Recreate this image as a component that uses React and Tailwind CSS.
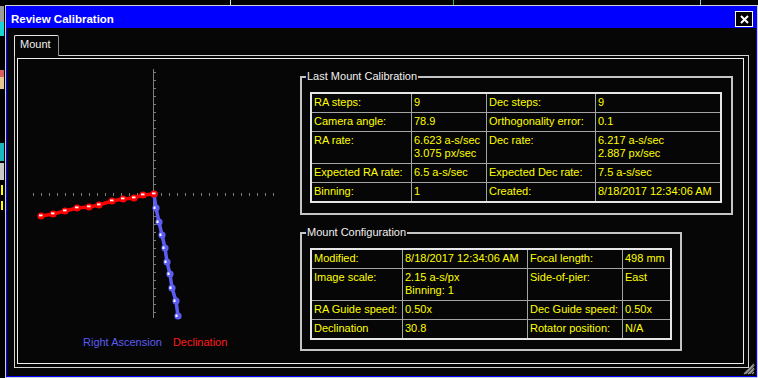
import React from 'react'

const RED = [[41,216],[53,214],[65,211],[77,208],[89,207],[99,205],[112,201],[123,199],[134,198],[143,195],[154,194]]
const BLUE = [[154,194],[156,208],[159,222],[162,235],[165,248],[167,262],[170,274],[172,288],[176,301],[178,316]]

const calibration = [
  ['RA steps:', '9', 'Dec steps:', '9'],
  ['Camera angle:', '78.9', 'Orthogonality error:', '0.1'],
  ['RA rate:', ['6.623 a-s/sec', '3.075 px/sec'], 'Dec rate:', ['6.217 a-s/sec', '2.887 px/sec']],
  ['Expected RA rate:', '6.5 a-s/sec', 'Expected Dec rate:', '7.5 a-s/sec'],
  ['Binning:', '1', 'Created:', '8/18/2017 12:34:06 AM'],
]

const config = [
  ['Modified:', '8/18/2017 12:34:06 AM', 'Focal length:', '498 mm'],
  ['Image scale:', ['2.15 a-s/px', 'Binning: 1'], 'Side-of-pier:', 'East'],
  ['RA Guide speed:', '0.50x', 'Dec Guide speed:', '0.50x'],
  ['Declination', '30.8', 'Rotator position:', 'N/A'],
]

function InfoTable({ rows, cols }) {
  return (
    <div className={`ml-[8px] mt-[9px] grid w-max gap-px border-2 border-[#e6e6e6] bg-[#a4a4a4] ${cols}`}>
      {rows.flat().map((cell, i) => (
        <div key={i} className="bg-[#060606] pb-[3px] pl-[2px] pt-[2px] text-[11px] leading-[13px] text-[#ffff00] whitespace-nowrap">
          {Array.isArray(cell) ? cell.map((line) => <div key={line}>{line}</div>) : cell}
        </div>
      ))}
    </div>
  )
}

function Chart() {
  const vTicks = Array.from({ length: 31 }, (_, k) => 72 + 8 * k)
  const hTicks = Array.from({ length: 31 }, (_, k) => 33 + 8 * k)
  const pts = (arr) => arr.map(([x, y]) => `${x},${y}`).join(' ')
  return (
    <svg width="282" height="276" viewBox="18 59 282 276" className="block">
      <line x1="153.5" y1="69" x2="153.5" y2="318" stroke="#7c7c7c" />
      {vTicks.map((y) => (
        <line key={y} x1="154" y1={y + 0.5} x2="156" y2={y + 0.5} stroke="#7c7c7c" />
      ))}
      {hTicks.map((x) => (
        <line key={x} x1={x + 0.5} y1="193" x2={x + 0.5} y2="196" stroke="#7c7c7c" />
      ))}
      <polyline points={pts(BLUE)} fill="none" stroke="#5c5cf2" strokeWidth="3.5" />
      {BLUE.map(([x, y]) => (
        <g key={`b${y}`}>
          <circle cx={x} cy={y} r="3.6" fill="#5c5cf2" />
          <rect x={x - 2.5} y={y - 1.5} width="2" height="2.5" fill="#fff" />
        </g>
      ))}
      <polyline points={pts(RED)} fill="none" stroke="#ff0000" strokeWidth="3.5" />
      {RED.map(([x, y]) => (
        <g key={`r${x}`}>
          <circle cx={x} cy={y} r="3.6" fill="#ff0000" />
          <rect x={x - 2} y={y - 1.5} width="3.5" height="1.8" fill="#fff" />
        </g>
      ))}
    </svg>
  )
}

function Backdrop() {
  return (
    <>
      <div className="absolute left-0 top-[6px] h-[16px] w-[4px] bg-[#9c9c9c]" />
      <div className="absolute left-0 top-[22px] h-[14px] w-[4px] bg-[#19d6d6]" />
      <div className="absolute left-0 top-[70px] h-[7px] w-[4px] bg-[#d86060]" />
      <div className="absolute left-0 top-[77px] h-[12px] w-[4px] bg-[#e6c890]" />
      <div className="absolute left-0 top-[143px] h-[18px] w-[4px] bg-[#18b8c0]" />
      <div className="absolute left-0 top-[163px] h-[17px] w-[4px] bg-[#c8c8c8]" />
      <div className="absolute left-[1px] top-[185px] h-[10px] w-[2px] bg-[#ffff00]" />
      <div className="absolute left-[1px] top-[201px] h-[9px] w-[2px] bg-[#ffff00]" />
      <div className="absolute left-[230px] top-0 h-[5px] w-px bg-[#c8f0f0]" />
      <div className="absolute left-[453px] top-0 h-[5px] w-px bg-[#20c040]" />
      <div className="absolute left-[700px] top-0 h-[5px] w-px bg-[#80d0e0]" />
    </>
  )
}

export default function App() {
  return (
    <div className="relative h-[378px] w-[758px] overflow-hidden bg-black pl-[5px] pt-[5px] font-['Liberation_Sans',Arial,sans-serif]">
      <Backdrop />
      <div className="relative h-[373px] w-[753px] border border-[#d0d0d0]">
        <div className="flex h-full flex-col border border-[#0000ff] bg-[#060606]">
          {/* title bar */}
          <div className="flex h-[21px] shrink-0 items-start justify-between bg-[#0000ff] pl-[4px] pr-[3px]">
            <span className="mt-[5px] text-[11.5px] font-bold leading-[14px] text-white">Review Calibration</span>
            <button type="button" className="mt-[4px] flex h-[16px] w-[18px] items-center justify-center border border-white bg-black">
              <svg width="9" height="9" viewBox="0 0 9 9">
                <path d="M1 1L8 8M8 1L1 8" stroke="#fff" strokeWidth="2" />
              </svg>
            </button>
          </div>

          <div className="flex-1 pl-[7px] pt-[7px]">
            {/* tab */}
            <div className="relative z-10 -mb-px h-[21px] w-[45px] rounded-t-[2px] border border-b-0 border-[#e8e8e8] border-r-[#8c8c8c] bg-[#060606] pl-[5px] pt-[2px] text-[11px] leading-[13px] text-[#f0f0f0]">
              Mount
            </div>
            {/* tab panel */}
            <div className="h-[313px] w-[735px] border border-[#d4d4d4] pb-[3px] pl-[2px] pr-[4px] pt-[2px]">
              <div className="flex h-full border border-[#f0f0f0]">
                <div className="flex w-[282px] shrink-0 flex-col">
                  <Chart />
                  <div className="mt-px flex gap-[11px] pl-[65px] text-[11px] leading-[13px]">
                    <span className="text-[#5c5cf2]">Right Ascension</span>
                    <span className="text-[#ff1a1a]">Declination</span>
                  </div>
                </div>

                <div className="flex flex-col pt-[11px]">
                  <fieldset className="w-[433px] border-2 border-[#c4c4c4] pb-[10px]">
                    <legend className="ml-[4px] px-[1px] text-[11px] leading-[13px] text-[#f0f0f0]">Last Mount Calibration</legend>
                    <InfoTable rows={calibration} cols="grid-cols-[99px_74px_108px_124px]" />
                  </fieldset>
                  <fieldset className="mt-[11px] w-[382px] border-2 border-[#c4c4c4] pb-[9px]">
                    <legend className="ml-[4px] px-[1px] text-[11px] leading-[13px] text-[#f0f0f0]">Mount Configuration</legend>
                    <InfoTable rows={config} cols="grid-cols-[90px_124px_94px_47px]" />
                  </fieldset>
                </div>
              </div>
            </div>
          </div>
        </div>

        {/* resize grip */}
        <svg width="12" height="12" viewBox="0 0 12 12" className="absolute bottom-[2px] right-[2px]">
          <path d="M11 1L1 11M11 5L5 11M11 9L9 11" stroke="#9a9a9a" strokeWidth="1.2" />
          <path d="M11 2.5L2.5 11M11 6.5L6.5 11" stroke="#e0e0e0" strokeWidth="1" />
        </svg>
      </div>
    </div>
  )
}
